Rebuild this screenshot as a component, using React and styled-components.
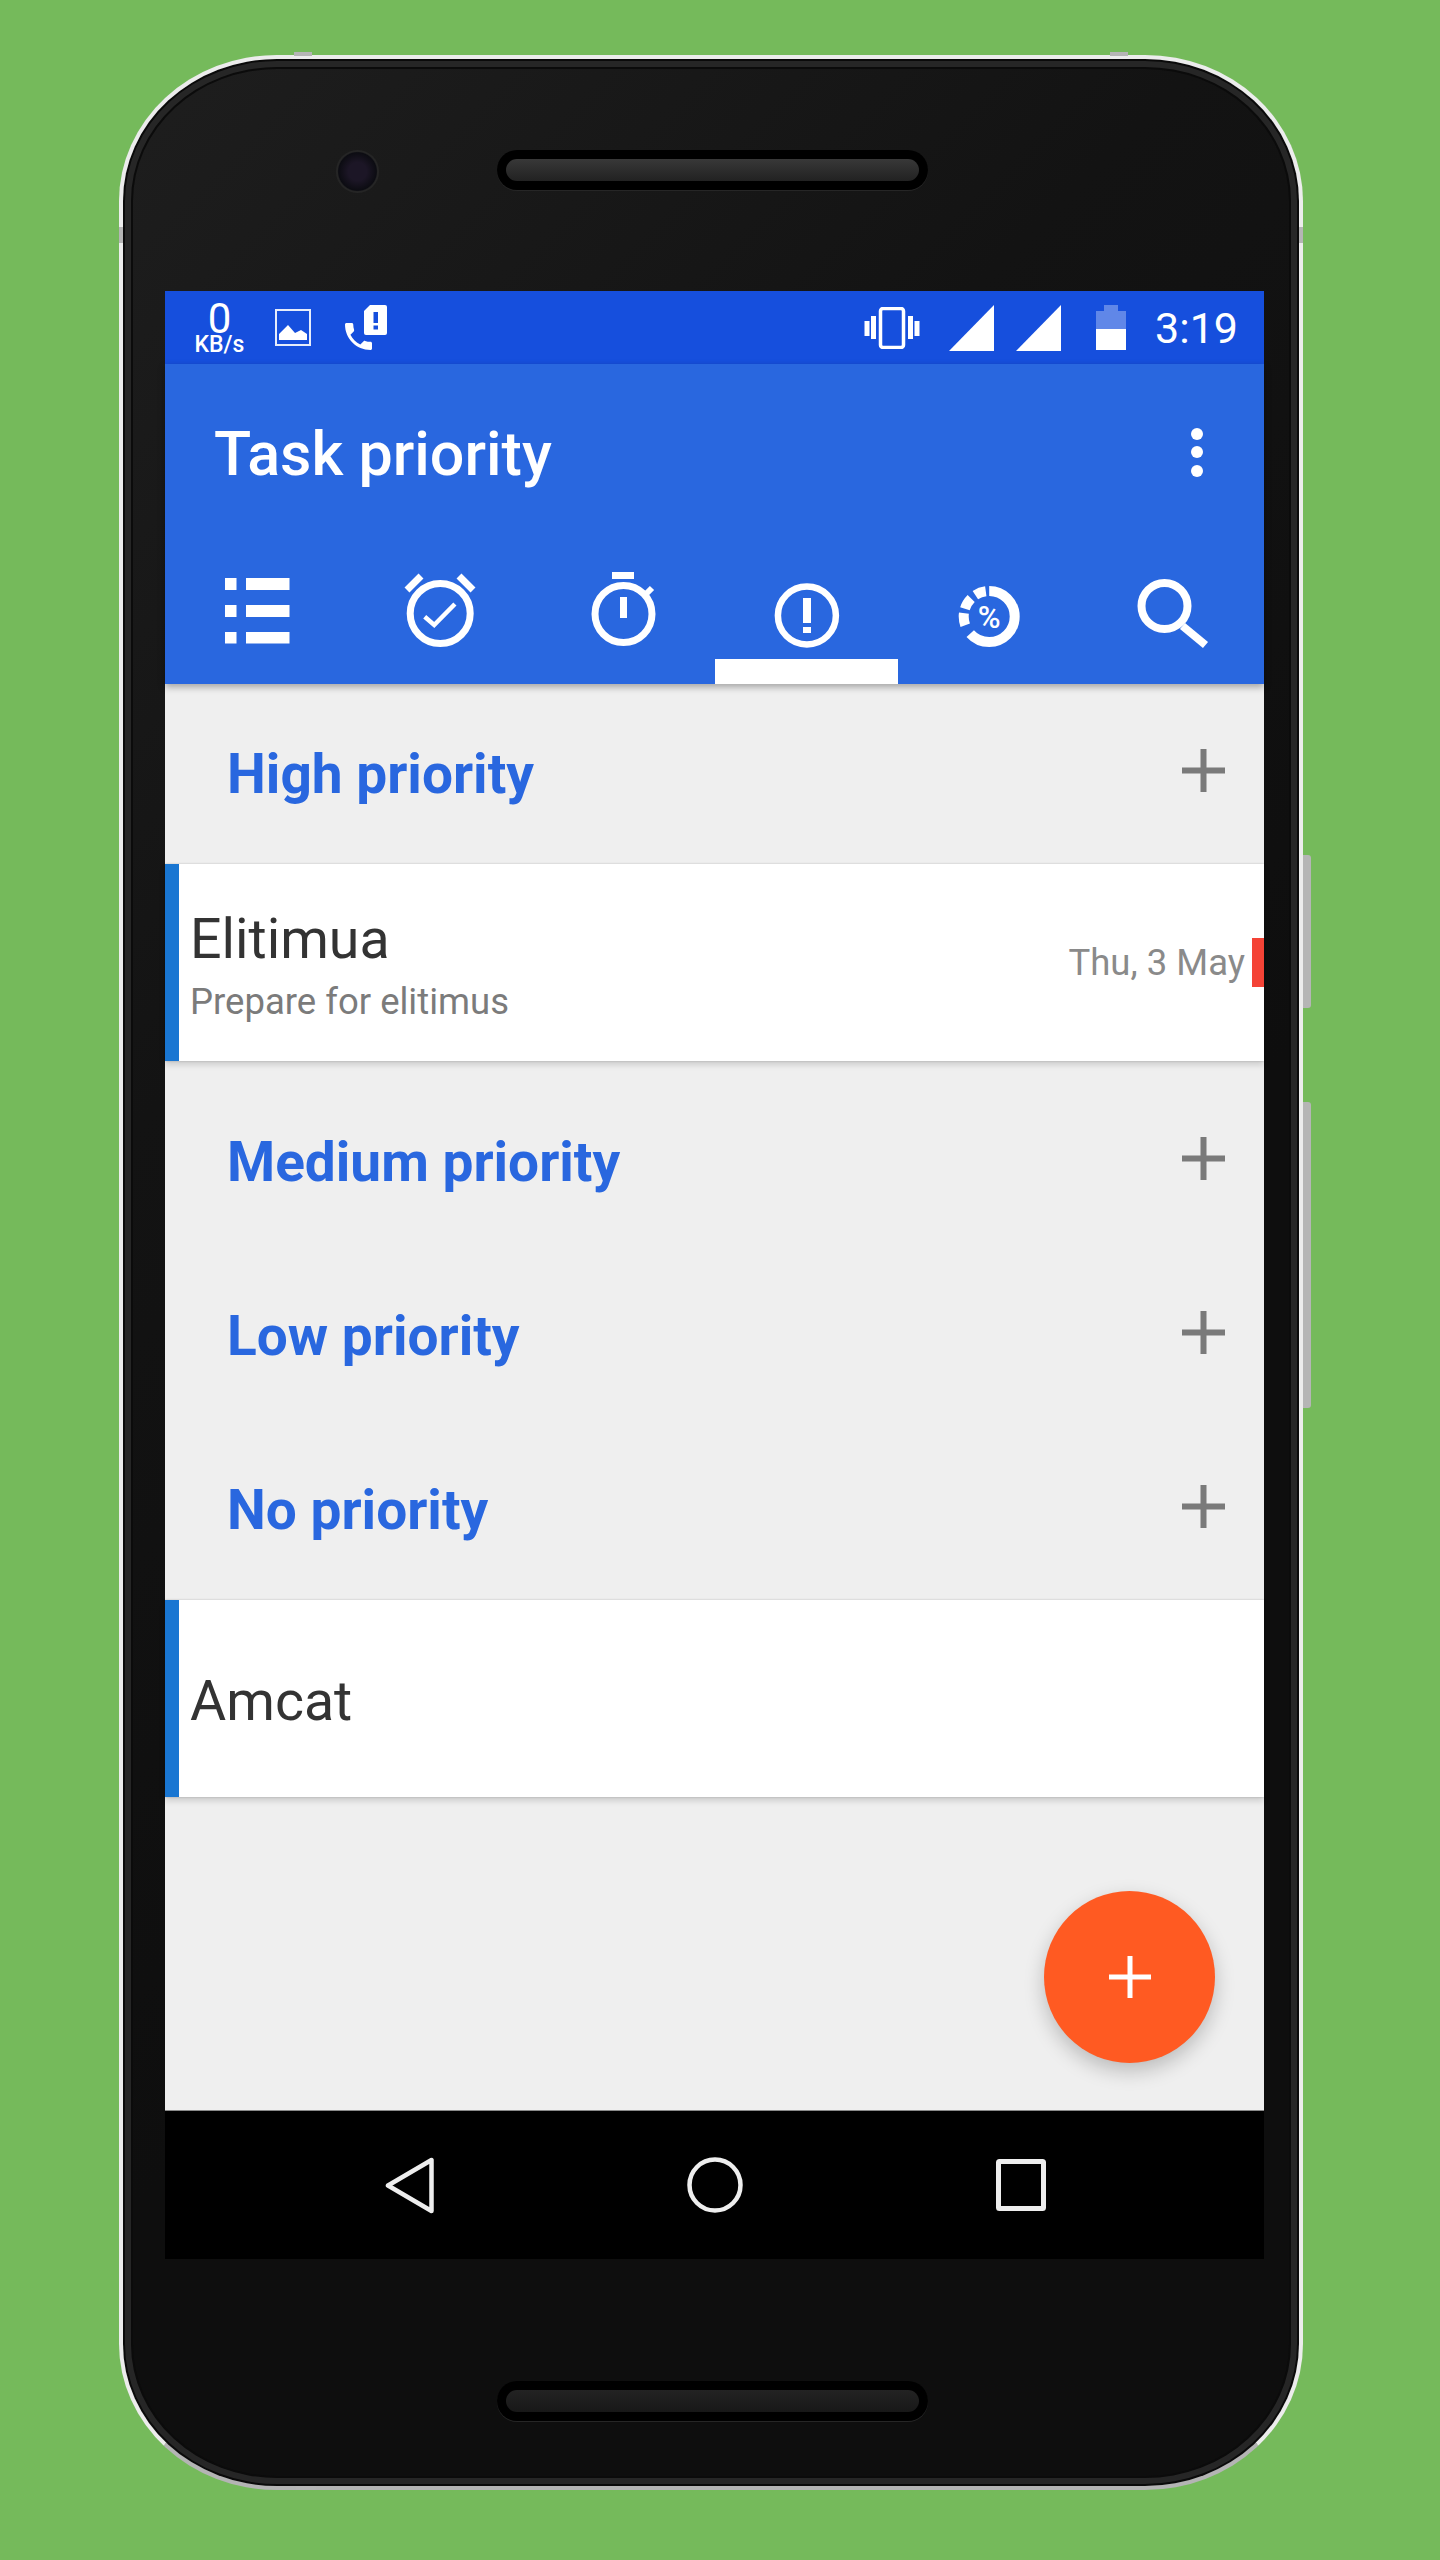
import React from 'react';
import styled, { createGlobalStyle } from 'styled-components';

const Global = createGlobalStyle`
  html, body { margin: 0; padding: 0; background: #75ba5b; }
  * { box-sizing: border-box; }
`;

const Page = styled.div`
  width: 1440px;
  height: 2560px;
  background: #75ba5b;
  padding: 55px 0 0 119px;
  overflow: hidden;
  font-family: Roboto, "Liberation Sans", sans-serif;
`;

const Phone = styled.div`
  position: relative;
  width: 1184px;
  height: 2435px;
  border-radius: 158px / 146px;
  background: linear-gradient(135deg, #1e1e1e 0%, #131313 30%, #0e0e0e 60%, #0e0e0e 100%);
  border: 4px solid #ececec;
  border-bottom-color: #b4b4b4;
  box-shadow: inset 0 0 0 2px #0a0a0a, inset 0 0 0 8px #262626, inset 0 0 0 10px #0b0b0b;
  display: flex;
  flex-direction: column;
  padding-left: 42px;
`;

const SideKey = styled.span`
  position: absolute;
  background: #b5b5b5;
  ${p => p.$css}
`;

const Forehead = styled.div`
  height: 232px;
  display: flex;
  align-items: flex-start;
  padding: 91px 0 0 171px;
  gap: 118px;
  flex-shrink: 0;
`;

const Camera = styled.div`
  width: 43px;
  height: 43px;
  border-radius: 50%;
  background: radial-gradient(circle, #1c1626 0 30%, #0c0c12 62%, #252525 66%, #2a2a2a 100%);
`;

const Speaker = styled.div`
  width: 431px;
  height: 40px;
  border-radius: 20px;
  background: #000;
  box-shadow: 0 1px 0 #262626;
  padding: 9px;
  flex-shrink: 0;
  display: flex;
`;

const SpeakerGrill = styled.div`
  flex: 1;
  border-radius: 11px;
  background: ${p => p.$dim ? 'linear-gradient(#232323, #181818)' : 'linear-gradient(#383838, #222)'};
`;

const Screen = styled.div`
  width: 1099px;
  height: 1968px;
  display: flex;
  flex-direction: column;
  flex-shrink: 0;
`;

const StatusBar = styled.div`
  height: 73px;
  background: #164fdd;
  color: #fff;
  display: flex;
  align-items: center;
  justify-content: space-between;
  padding: 0 26px 0 29px;
  flex-shrink: 0;
`;

const StatusGroup = styled.div`
  display: flex;
  align-items: center;
`;

const NetSpeed = styled.div`
  width: 51px;
  display: flex;
  flex-direction: column;
  align-items: center;
`;

const NetValue = styled.span`
  font-size: 42px;
  line-height: 34px;
  height: 34px;
`;

const NetUnit = styled.span`
  font-size: 23px;
  line-height: 18px;
  font-weight: 500;
`;

const Clock = styled.span`
  font-size: 43px;
  line-height: 42px;
  margin-left: 29px;
`;

const Spaced = styled.svg`
  display: block;
  margin-left: ${p => p.$ml || 0}px;
  flex-shrink: 0;
`;

const AppBar = styled.div`
  background: #2967df;
  color: #fff;
  box-shadow: 0 3px 7px rgba(0,0,0,.32);
  position: relative;
  z-index: 2;
  flex-shrink: 0;
`;

const Toolbar = styled.div`
  height: 176px;
  display: flex;
  align-items: center;
  justify-content: space-between;
  padding: 0 61px 0 49px;
`;

const Title = styled.h1`
  margin: 0;
  font-size: 61px;
  font-weight: 500;
  line-height: 70px;
  position: relative;
  top: 2px;
`;

const MoreButton = styled.div`
  display: flex;
  flex-direction: column;
  gap: 6.5px;
`;

const MoreDot = styled.span`
  width: 12px;
  height: 12px;
  border-radius: 50%;
  background: #fff;
`;

const Tabs = styled.div`
  height: 144px;
  display: grid;
  grid-template-columns: repeat(6, 1fr);
`;

const Tab = styled.div`
  display: flex;
  flex-direction: column;
  align-items: center;
  justify-content: space-between;
  padding-top: 25px;
`;

const TabGlyph = styled.svg`
  display: block;
  width: 100px;
  height: 94px;
`;

const TabIndicator = styled.span`
  width: 100%;
  height: 25px;
  background: ${p => p.$active ? '#fff' : 'transparent'};
`;

const Content = styled.div`
  flex: 1;
  position: relative;
  background: #efefef;
  padding-top: 3px;
  border-bottom: 1px solid #8a8a8a;
  display: flex;
  flex-direction: column;
`;

const SectionRow = styled.div`
  height: 174px;
  display: flex;
  align-items: center;
  justify-content: space-between;
  padding: 0 39px 0 62px;
  flex-shrink: 0;
`;

const SectionTitle = styled.span`
  font-size: 55px;
  font-weight: 700;
  color: #2967df;
`;

const AddIcon = styled.svg`
  display: block;
  position: relative;
  top: -4px;
`;

const Card = styled.div`
  height: 197px;
  margin: 3px 0 14px;
  background: #fff;
  border-left: 14px solid #1976d2;
  box-shadow: 0 0 2px rgba(0,0,0,.2), 0 4px 6px rgba(0,0,0,.14);
  display: flex;
  align-items: center;
  justify-content: space-between;
  padding-left: 11px;
  flex-shrink: 0;
`;

const CardBody = styled.div`
  display: flex;
  flex-direction: column;
  padding-top: 7px;
`;

const CardTitle = styled.span`
  font-size: 55.5px;
  line-height: 64px;
  color: #333;
`;

const CardNote = styled.span`
  font-size: 36.5px;
  line-height: 44px;
  margin-top: 8px;
  color: #7b7b7b;
`;

const CardMeta = styled.div`
  display: flex;
  align-items: center;
  gap: 7px;
`;

const CardDate = styled.span`
  font-size: 36.5px;
  line-height: 44px;
  color: #8a8a8a;
`;

const PriorityTag = styled.span`
  width: 12px;
  height: 49px;
  background: #f44336;
`;

const Fab = styled.div`
  position: absolute;
  right: 49px;
  bottom: 47px;
  width: 171px;
  height: 172px;
  border-radius: 50%;
  background: #ff5a22;
  box-shadow: 0 8px 20px rgba(0,0,0,.22);
  display: flex;
  align-items: center;
  justify-content: center;
`;

const NavBar = styled.div`
  height: 148px;
  background: #000;
  display: flex;
  align-items: center;
  gap: 253px;
  padding-left: 220px;
  flex-shrink: 0;
`;

const Chin = styled.div`
  flex: 1;
  display: flex;
  padding: 122px 0 0 332px;
  align-items: flex-start;
`;

const Ico = ({ children }) => (
  <TabGlyph viewBox="0 0 100 94" fill="none" stroke="#fff">{children}</TabGlyph>
);

const icons = [
  <Ico key="list">
    <g fill="#fff" stroke="none">
      <rect x="18" y="13" width="11.5" height="12" /><rect x="39" y="13" width="43.5" height="12" />
      <rect x="18" y="40" width="11.5" height="12" /><rect x="39" y="40" width="43.5" height="12" />
      <rect x="18" y="67" width="11.5" height="11.5" /><rect x="39" y="67" width="43.5" height="11.5" />
    </g>
  </Ico>,
  <Ico key="alarm">
    <circle cx="50.2" cy="48.5" r="30" strokeWidth="7" />
    <path d="M17 25 L31 11 M83 25 L69 11" strokeWidth="7" />
    <path d="M34.7 51.7 L44.2 60 L64.9 39" strokeWidth="4.5" />
  </Ico>,
  <Ico key="timer">
    <circle cx="50.5" cy="49" r="28.5" strokeWidth="7" />
    <g fill="#fff" stroke="none"><rect x="39" y="7" width="22" height="7" /><rect x="47" y="32" width="7" height="21" /></g>
    <path d="M73 29 L79 23" strokeWidth="6" />
  </Ico>,
  <Ico key="priority">
    <circle cx="50.9" cy="50.5" r="29" strokeWidth="6.5" />
    <g fill="#fff" stroke="none"><rect x="47" y="33" width="8" height="25" /><rect x="47" y="62" width="8" height="6" /></g>
  </Ico>,
  <Ico key="percent">
    <circle cx="50.2" cy="51.5" r="25.5" strokeWidth="10" pathLength="360" strokeDasharray="228 22 28 10 27 12 25 8" transform="rotate(-90 50.2 51.5)" />
    <text x="50.2" y="63" textAnchor="middle" fill="#fff" stroke="none" fontFamily="Roboto, sans-serif" fontWeight="500" fontSize="31">%</text>
  </Ico>,
  <Ico key="search">
    <circle cx="42.5" cy="41" r="23" strokeWidth="8" />
    <path d="M60.5 61 L83.5 80" strokeWidth="8" />
  </Ico>,
];

const Section = ({ title }) => (
  <SectionRow>
    <SectionTitle>{title}</SectionTitle>
    <AddIcon width="43" height="43" viewBox="0 0 43 43">
      <rect x="0" y="18.5" width="43" height="6" fill="#7a7a7a" /><rect x="18.5" y="0" width="6" height="43" fill="#7a7a7a" />
    </AddIcon>
  </SectionRow>
);

export default function App() {
  return (
    <Page>
      <Global />
      <Phone>
        <SideKey $css="left: 171px; top: -7px; width: 18px; height: 4px;" />
        <SideKey $css="right: 171px; top: -7px; width: 18px; height: 4px;" />
        <SideKey $css="left: -4px; top: 168px; width: 4px; height: 16px;" />
        <SideKey $css="right: -4px; top: 168px; width: 4px; height: 16px;" />
        <SideKey $css="left: 173px; bottom: -4px; width: 20px; height: 4px;" />
        <SideKey $css="right: -12px; top: 796px; width: 8px; height: 153px; border-radius: 0 3px 3px 0;" />
        <SideKey $css="right: -12px; top: 1043px; width: 8px; height: 306px; border-radius: 0 3px 3px 0;" />
        <Forehead>
          <Camera />
          <Speaker><SpeakerGrill /></Speaker>
        </Forehead>
        <Screen>
          <StatusBar>
            <StatusGroup>
              <NetSpeed>
                <NetValue>0</NetValue>
                <NetUnit>KB/s</NetUnit>
              </NetSpeed>
              <Spaced $ml={30} width="36" height="37" viewBox="0 0 36 37">
                <rect x="1" y="1" width="34" height="35" fill="none" stroke="#e6ecfb" strokeWidth="2" />
                <path d="M4 31 V25 L13 16 L20 24 L26 21 L32 25 V31 Z" fill="#fff" />
              </Spaced>
              <Spaced $ml={34} width="42" height="46" viewBox="0 0 42 46">
                <path transform="translate(-4.5 13.5) scale(1.5)" fill="#fff" d="M6.62 10.79c1.44 2.83 3.76 5.14 6.59 6.59l2.2-2.2c.27-.27.67-.36 1.02-.24 1.12.37 2.33.57 3.57.57.55 0 1 .45 1 1V20c0 .55-.45 1-1 1-9.39 0-17-7.61-17-17 0-.55.45-1 1-1h3.5c.55 0 1 .45 1 1 0 1.25.2 2.45.57 3.57.11.35.03.74-.25 1.02l-2.2 2.2z" />
                <path fill="#fff" d="M25 0 H40 a2 2 0 0 1 2 2 V28 a2 2 0 0 1 -2 2 H21 a2 2 0 0 1 -2 -2 V6 Z" />
                <rect x="28.5" y="7" width="4.5" height="11" fill="#164fdd" />
                <rect x="28.5" y="20.5" width="4.5" height="4" fill="#164fdd" />
              </Spaced>
            </StatusGroup>
            <StatusGroup>
              <Spaced width="56" height="42" viewBox="0 0 56 42">
                <rect x="16.5" y="1.5" width="23" height="39" rx="2.5" fill="none" stroke="#fff" strokeWidth="3.5" />
                <g fill="#fff">
                  <rect x="0.5" y="14" width="5" height="15" /><rect x="7" y="9" width="5" height="23" />
                  <rect x="44" y="9" width="5" height="23" /><rect x="50.5" y="14" width="5" height="15" />
                </g>
              </Spaced>
              <Spaced $ml={29} width="45" height="46" viewBox="0 0 45 46"><path d="M45 0 V46 H0 Z" fill="#fff" /></Spaced>
              <Spaced $ml={22} width="45" height="46" viewBox="0 0 45 46"><path d="M45 0 V46 H0 Z" fill="#fff" /></Spaced>
              <Spaced $ml={35} width="30" height="45" viewBox="0 0 30 45">
                <path d="M8 0 H22 V6 H30 V24 H0 V6 H8 Z" fill="#fff" opacity="0.32" />
                <rect x="0" y="24" width="30" height="21" fill="#fff" />
              </Spaced>
              <Clock>3:19</Clock>
            </StatusGroup>
          </StatusBar>
          <AppBar>
            <Toolbar>
              <Title>Task priority</Title>
              <MoreButton><MoreDot /><MoreDot /><MoreDot /></MoreButton>
            </Toolbar>
            <Tabs>
              {icons.map((icon, i) => (
                <Tab key={i}>
                  {icon}
                  <TabIndicator $active={i === 3} />
                </Tab>
              ))}
            </Tabs>
          </AppBar>
          <Content>
            <Section title="High priority" />
            <Card>
              <CardBody>
                <CardTitle>Elitimua</CardTitle>
                <CardNote>Prepare for elitimus</CardNote>
              </CardBody>
              <CardMeta>
                <CardDate>Thu, 3 May</CardDate>
                <PriorityTag />
              </CardMeta>
            </Card>
            <Section title="Medium priority" />
            <Section title="Low priority" />
            <Section title="No priority" />
            <Card>
              <CardBody><CardTitle>Amcat</CardTitle></CardBody>
            </Card>
            <Fab>
              <svg width="42" height="42" viewBox="0 0 42 42">
                <rect x="0" y="18.5" width="42" height="5" fill="#fff" /><rect x="18.5" y="0" width="5" height="42" fill="#fff" />
              </svg>
            </Fab>
          </Content>
          <NavBar>
            <svg width="49" height="57" viewBox="0 0 49 57" fill="none" stroke="#eee" strokeWidth="4.5" strokeLinejoin="round"><path d="M46.5 3 V54 L3 28.5 Z" /></svg>
            <svg width="56" height="56" viewBox="0 0 56 56" fill="none" stroke="#eee" strokeWidth="4.5"><circle cx="28" cy="28" r="25.5" /></svg>
            <svg width="50" height="52" viewBox="0 0 50 52" fill="none" stroke="#eee" strokeWidth="5" strokeLinejoin="round"><rect x="2.5" y="2.5" width="45" height="47" rx="1" /></svg>
          </NavBar>
        </Screen>
        <Chin>
          <Speaker><SpeakerGrill $dim /></Speaker>
        </Chin>
      </Phone>
    </Page>
  );
}
